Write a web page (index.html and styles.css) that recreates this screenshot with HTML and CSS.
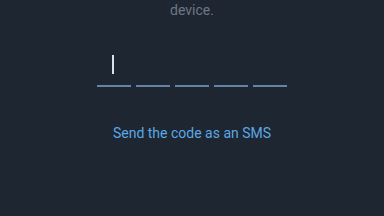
FILE: index.html
```html
<!DOCTYPE html>
<html lang="en">
<head>
    <meta charset="UTF-8">
    <meta name="viewport" content="width=device-width, initial-scale=1.0">
    <title>Verify</title>
    <link rel="stylesheet" href="styles.css">
</head>
<body>
    <div class="screen">
        <p class="hint">device.</p>
        <div class="code">
            <div class="digit active"><span class="caret"></span></div>
            <div class="digit"></div>
            <div class="digit"></div>
            <div class="digit"></div>
            <div class="digit"></div>
        </div>
        <a class="sms" href="#">Send the code as an SMS</a>
    </div>
</body>
</html>
```

FILE: styles.css
```css
body{
    margin: 0;
    background-color: #1e2631;
    font-family: Roboto, "Noto Sans", sans-serif;
}
.screen{
    width: 384px;
    height: 216px;
    display: flex;
    flex-direction: column;
    align-items: center;
}
.hint{
    margin: 0;
    padding-top: 2px;
    font-size: 14px;
    line-height: 16px;
    color: #6e7784;
}
.code{
    display: flex;
    gap: 5px;
    margin-top: 33px;
}
.digit{
    width: 34px;
    height: 30px;
    border-bottom: 2px solid #6583a6;
    display: flex;
    justify-content: center;
    align-items: flex-start;
    padding-top: 4px;
}
.caret{
    width: 2px;
    height: 19px;
    margin-right: 3px;
    background-color: #d9e2ea;
}
.sms{
    margin-top: 38px;
    font-size: 14px;
    line-height: 16px;
    color: #5aa9e6;
    text-decoration: none;
}
```
